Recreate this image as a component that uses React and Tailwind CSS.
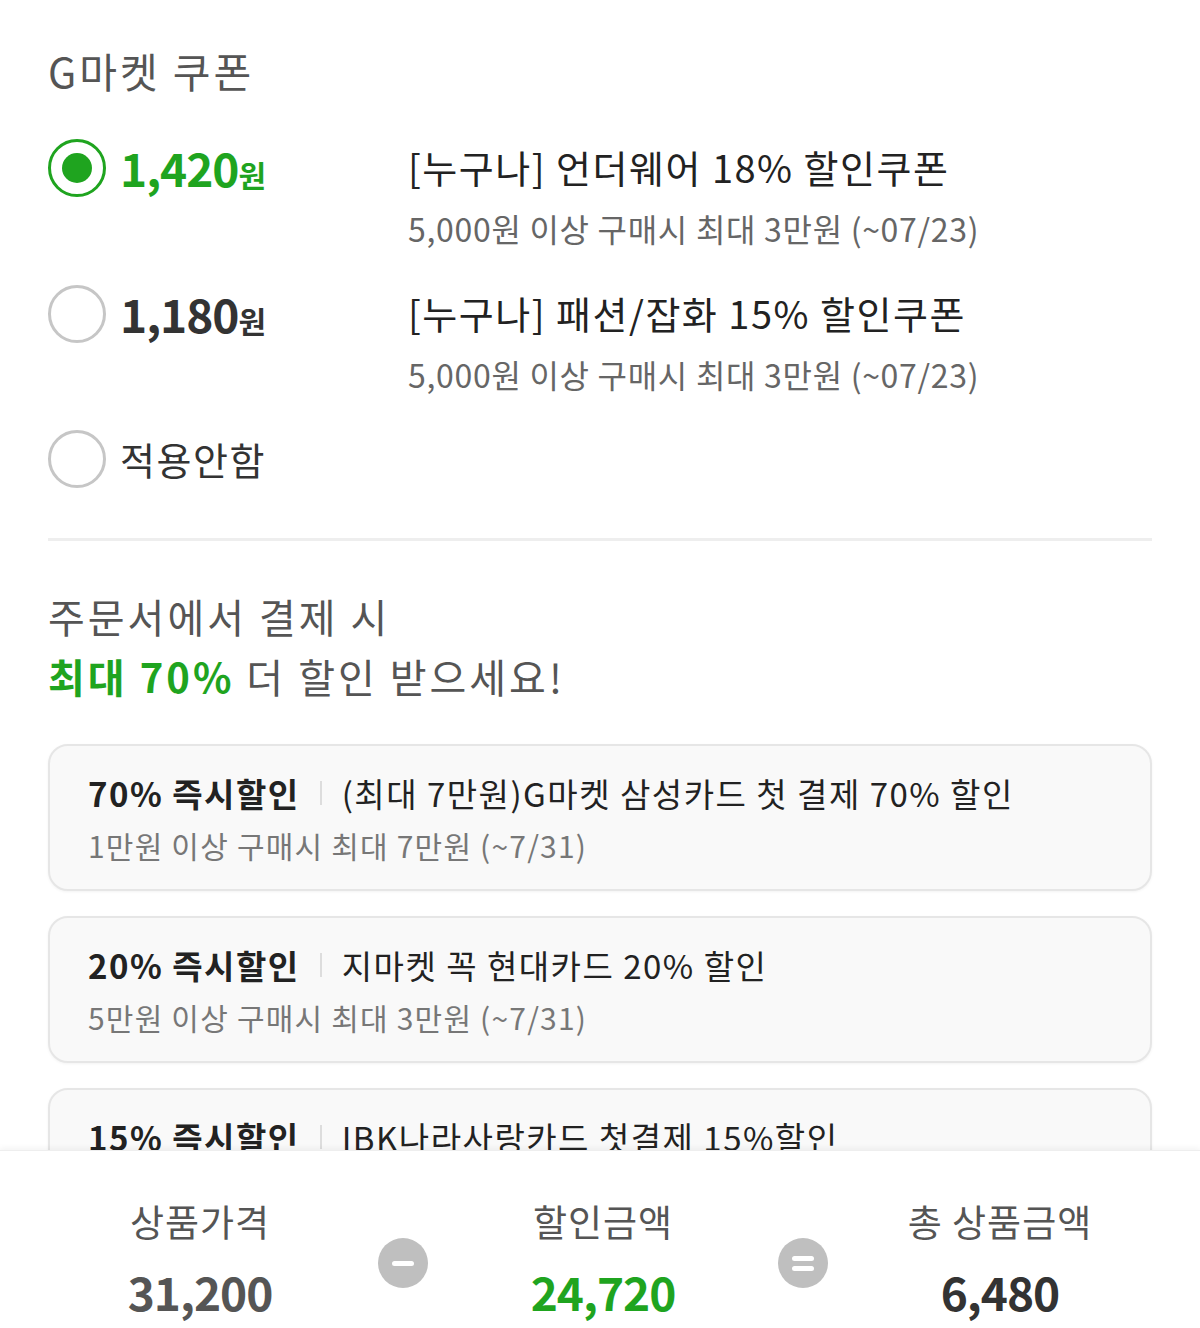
const GREEN = 'text-[#1fa41f]';

function Radio({ checked }) {
  if (checked) {
    return (
      <div className="w-[58px] h-[58px] rounded-full border-[3px] border-[#1fa41f] flex items-center justify-center shrink-0">
        <div className="w-[30px] h-[30px] rounded-full bg-[#1fa41f]" />
      </div>
    );
  }
  return <div className="w-[58px] h-[58px] rounded-full border-[3px] border-[#c6c6c6] shrink-0" />;
}

function CouponRow({ amount, checked, title, desc }) {
  return (
    <div className="flex items-start">
      <div className="flex items-center w-[360px] shrink-0">
        <Radio checked={checked} />
        <div className={`ml-[14px] flex items-baseline font-bold ${checked ? GREEN : 'text-[#333]'}`}>
          <span className="text-[46px] leading-[58px] tracking-[-1px]">{amount}</span>
          <span className="text-[30px]">원</span>
        </div>
      </div>
      <div className="flex flex-col">
        <p className="text-[38px] leading-[58px] tracking-[1.5px] text-[#222]">{title}</p>
        <p className="mt-[10px] text-[32px] leading-[44px] tracking-[0.7px] text-[#666]">{desc}</p>
      </div>
    </div>
  );
}

function CardBenefit({ rate, title, desc }) {
  return (
    <div className="rounded-[20px] border-2 border-[#e6e6e6] bg-[#f9f9f9] shadow-[0_1px_3px_rgba(0,0,0,0.05)] pl-[38px] pr-6 pt-[24px] pb-[22px]">
      <div className="flex items-center text-[33px] leading-[46px] tracking-[1.5px] text-[#222]">
        <span className="font-bold">{rate}</span>
        <span className="mx-[20px] w-[2px] h-[24px] bg-[#dddddd]" />
        <span>{title}</span>
      </div>
      <p className="mt-[7px] text-[30px] leading-[44px] tracking-[1.2px] text-[#777]">{desc}</p>
    </div>
  );
}

function Summary({ label, value, color }) {
  return (
    <div className="flex flex-col items-center">
      <span className="text-[37px] leading-[52px] tracking-[1px] text-[#555]">{label}</span>
      <span className={`mt-[18px] text-[46px] leading-[52px] font-bold tracking-[-1px] ${color}`}>{value}</span>
    </div>
  );
}

function OpCircle({ children }) {
  return (
    <div className="w-[50px] h-[50px] rounded-full bg-[#bfbfbf] flex flex-col items-center justify-center gap-[5px] shrink-0 mt-[43px]">
      {children}
    </div>
  );
}

export default function App() {
  return (
    <div
      className="w-[1200px] h-[1328px] bg-white flex flex-col overflow-hidden"
      style={{ fontFamily: '"Noto Sans CJK KR", "Noto Sans", sans-serif' }}
    >
      <div className="h-[1150px] overflow-hidden px-[48px] pt-[42px]">
        <h2 className="text-[41px] leading-[56px] tracking-[3px] text-[#555]">G마켓 쿠폰</h2>

        <div className="mt-[40px] flex flex-col gap-[34px]">
          <CouponRow
            checked
            amount="1,420"
            title="[누구나] 언더웨어 18% 할인쿠폰"
            desc="5,000원 이상 구매시 최대 3만원 (~07/23)"
          />
          <CouponRow
            amount="1,180"
            title="[누구나] 패션/잡화 15% 할인쿠폰"
            desc="5,000원 이상 구매시 최대 3만원 (~07/23)"
          />
          <div className="flex items-center">
            <Radio />
            <span className="ml-[14px] text-[38px] leading-[58px] tracking-[1.5px] text-[#333]">적용안함</span>
          </div>
        </div>

        <div className="mt-[50px] h-[3px] bg-[#eeeeee]" />

        <div className="mt-[45px] text-[40px] leading-[60px] tracking-[3px] text-[#555]">
          <p>주문서에서 결제 시</p>
          <p>
            <span className={`font-bold ${GREEN}`}>최대 70%</span> 더 할인 받으세요!
          </p>
        </div>

        <div className="mt-[38px] flex flex-col gap-[25px]">
          <CardBenefit
            rate="70% 즉시할인"
            title="(최대 7만원)G마켓 삼성카드 첫 결제 70% 할인"
            desc="1만원 이상 구매시 최대 7만원 (~7/31)"
          />
          <CardBenefit
            rate="20% 즉시할인"
            title="지마켓 꼭 현대카드 20% 할인"
            desc="5만원 이상 구매시 최대 3만원 (~7/31)"
          />
          <CardBenefit
            rate="15% 즉시할인"
            title="IBK나라사랑카드 첫결제 15%할인"
            desc="5만원 이상 구매시 최대 3만원 (~7/31)"
          />
        </div>
      </div>

      <div className="h-[178px] bg-white border-t border-[#eeeeee] shadow-[0_-2px_6px_rgba(0,0,0,0.05)] flex items-start pt-[44px] pl-[22px]">
        <div className="w-[356px] flex justify-center">
          <Summary label="상품가격" value="31,200" color="text-[#555]" />
        </div>
        <OpCircle>
          <span className="w-[22px] h-[5px] rounded-full bg-white" />
        </OpCircle>
        <div className="w-[350px] flex justify-center">
          <Summary label="할인금액" value="24,720" color={GREEN} />
        </div>
        <OpCircle>
          <span className="w-[22px] h-[5px] rounded-full bg-white" />
          <span className="w-[22px] h-[5px] rounded-full bg-white" />
        </OpCircle>
        <div className="w-[344px] flex justify-center">
          <Summary label="총 상품금액" value="6,480" color="text-[#333]" />
        </div>
      </div>
    </div>
  );
}
